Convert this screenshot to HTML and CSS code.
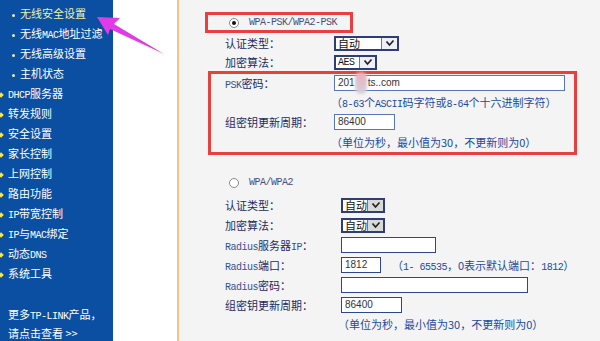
FILE: index.html
```html
<!DOCTYPE html>
<html lang="zh-CN">
<head>
    <meta charset="UTF-8">
    <title>无线安全设置</title>
    <link rel="stylesheet" href="styles.css">
</head>
<body>

<div class="page">
    <!-- Left menu -->
    <nav class="sidebar">
        <ul class="menu">
            <li class="sub active">无线安全设置</li>
            <li class="sub">无线<span class="mono">MAC</span>地址过滤</li>
            <li class="sub">无线高级设置</li>
            <li class="sub">主机状态</li>
            <li class="top"><span class="mono">DHCP</span>服务器</li>
            <li class="top">转发规则</li>
            <li class="top">安全设置</li>
            <li class="top">家长控制</li>
            <li class="top">上网控制</li>
            <li class="top">路由功能</li>
            <li class="top"><span class="mono">IP</span>带宽控制</li>
            <li class="top"><span class="mono">IP</span>与<span class="mono">MAC</span>绑定</li>
            <li class="top">动态<span class="mono">DNS</span></li>
            <li class="top">系统工具</li>
        </ul>
        <div class="more">更多<span class="mono">TP-LINK</span>产品，<br>请点击查看 &gt;&gt;</div>
    </nav>

    <div class="gap"></div>

    <!-- Settings form -->
    <main class="content">
        <div class="form">
            <div class="choice boxed">
                <span class="radio checked"></span><span class="mode">WPA-PSK/WPA2-PSK</span>
            </div>
            <div class="row h20">
                <span class="label">认证类型：</span>
                <div class="select w65"><span class="value">自动</span><span class="drop"><svg width="10" height="8" viewBox="0 0 10 8"><polyline points="1.5,2.5 4.5,6 8.5,1.5" fill="none" stroke="#222" stroke-width="1.7"/></svg></span></div>
            </div>
            <div class="row h18">
                <span class="label">加密算法：</span>
                <div class="select w43"><span class="value mono">AES</span><span class="drop"><svg width="10" height="8" viewBox="0 0 10 8"><polyline points="1.5,2.5 4.5,6 8.5,1.5" fill="none" stroke="#222" stroke-width="1.7"/></svg></span></div>
            </div>

            <div class="highlight">
                <div class="row h18">
                    <span class="label"><span class="mono">PSK</span>密码：</span>
                    <div class="input w231">201<span class="blur"></span>ts..com</div>
                </div>
                <div class="row h20">
                    <span></span>
                    <span class="hint">（<span class="mono">8-63</span>个<span class="mono">ASCII</span>码字符或<span class="mono">8-64</span>个十六进制字符）</span>
                </div>
                <div class="row h20">
                    <span class="label">组密钥更新周期：</span>
                    <div class="input w61">86400</div>
                </div>
                <div class="row h20">
                    <span></span>
                    <span class="hint">（单位为秒，最小值为30，不更新则为0）</span>
                </div>
            </div>

            <div class="choice plain">
                <span class="radio"></span><span class="mode">WPA/WPA2</span>
            </div>
            <div class="row wide h20">
                <span class="label">认证类型：</span>
                <div class="select small w44"><span class="value">自动</span><span class="drop"><svg width="10" height="8" viewBox="0 0 10 8"><polyline points="1.5,2.5 4.5,6 8.5,1.5" fill="none" stroke="#222" stroke-width="1.7"/></svg></span></div>
            </div>
            <div class="row wide h20">
                <span class="label">加密算法：</span>
                <div class="select small w44"><span class="value">自动</span><span class="drop"><svg width="10" height="8" viewBox="0 0 10 8"><polyline points="1.5,2.5 4.5,6 8.5,1.5" fill="none" stroke="#222" stroke-width="1.7"/></svg></span></div>
            </div>
            <div class="row wide h20">
                <span class="label"><span class="mono">Radius</span>服务器<span class="mono">IP</span>：</span>
                <div class="input dark w95"></div>
            </div>
            <div class="row wide h20">
                <span class="label"><span class="mono">Radius</span>端口：</span>
                <div class="inline">
                    <div class="input dark w40">1812</div>
                    <span class="hint">（<span class="mono">1- 65535</span>，0表示默认端口：<span class="mono">1812</span>）</span>
                </div>
            </div>
            <div class="row wide h20">
                <span class="label"><span class="mono">Radius</span>密码：</span>
                <div class="input dark w187"></div>
            </div>
            <div class="row wide h20">
                <span class="label">组密钥更新周期：</span>
                <div class="input dark w61">86400</div>
            </div>
            <div class="row wide h18">
                <span></span>
                <span class="hint">（单位为秒，最小值为30，不更新则为0）</span>
            </div>
        </div>
    </main>
</div>

<!-- Pointer arrow drawn over the menu -->
<svg class="arrow" width="600" height="341" viewBox="0 0 600 341">
    <polygon points="97,17 120,18 114,24 164,54 110,29 108,35" fill="#e03be6"/>
</svg>

</body>
</html>
```

FILE: styles.css
```css
body {
    margin: 0;
    font-family: "Noto Sans CJK SC", "Liberation Sans", sans-serif;
    font-size: 11px;
    background-color: #fff;
}
.page {
    display: flex;
    height: 341px;
    overflow: hidden;
}
.mono {
    font-family: "Liberation Mono", monospace;
    font-size: 10px;
    letter-spacing: -0.5px;
}

/* Left menu */
.sidebar {
    width: 113px;
    background-color: #0b4fa2;
    color: #fff;
    padding-top: 3px;
    box-sizing: border-box;
}
.menu {
    list-style: none;
    margin: 0;
    padding: 0;
}
.menu li {
    height: 20px;
    line-height: 20px;
    white-space: nowrap;
}
.menu .sub {
    padding-left: 20px;
}
.menu .sub::before {
    content: "";
    display: inline-block;
    width: 3px;
    height: 3px;
    border-radius: 50%;
    background-color: #e6eea8;
    margin-left: -8px;
    margin-right: 5px;
    vertical-align: middle;
}
.menu .active {
    color: #eef2a4;
}
.menu .top {
    padding-left: 8px;
}
.menu .top::before {
    content: "";
    display: inline-block;
    width: 4px;
    height: 4px;
    background-color: #ffe63a;
    transform: rotate(45deg);
    margin-left: -9px;
    margin-right: 5px;
    vertical-align: middle;
}
.more {
    margin-top: 23px;
    padding-left: 8px;
    line-height: 16px;
}

.gap {
    width: 64px;
    background-color: #fff;
}

/* Right content */
.content {
    flex: 1;
    background-color: #f4f4f4;
    border-left: 2px solid #f5c08a;
}
.form {
    padding: 12px 0 0 46px;
}
.choice {
    display: flex;
    align-items: center;
    box-sizing: border-box;
}
.choice.boxed {
    margin-left: -20px;
    width: 148px;
    height: 21px;
    border: 3px solid #e8403f;
    padding-left: 21px;
}
.choice.plain {
    margin-top: 15px;
    margin-left: -17px;
    padding-left: 21px;
    height: 25px;
}
.radio {
    display: inline-block;
    width: 10px;
    height: 10px;
    border: 1px solid #8a8a8a;
    border-radius: 50%;
    background-color: #fff;
    box-sizing: border-box;
    margin-right: 10px;
    position: relative;
}
.radio.checked::after {
    content: "";
    position: absolute;
    left: 2px;
    top: 2px;
    width: 4px;
    height: 4px;
    border-radius: 50%;
    background-color: #111;
}
.mode {
    font-family: "Liberation Mono", monospace;
    font-size: 10px;
    letter-spacing: -0.5px;
    color: #4b4f7a;
}

.row {
    display: grid;
    grid-template-columns: 109px auto;
    align-items: center;
}
.row.wide {
    grid-template-columns: 116px auto;
}
.h18 { height: 18px; }
.h20 { height: 20px; }
.label {
    color: #1d2a62;
    white-space: nowrap;
}
.label .mono {
    color: #34508f;
}
.hint {
    color: #2149a0;
    white-space: nowrap;
    margin-left: -3px;
}
.inline {
    display: flex;
    align-items: center;
}
.inline .hint {
    margin-left: 11px;
}

.highlight {
    margin-left: -17px;
    width: 369px;
    border: 3px solid #e8403f;
    padding-left: 14px;
    box-sizing: border-box;
}

/* Fake dropdowns */
.select {
    display: flex;
    align-items: stretch;
    height: 15px;
    border: 2px solid #2f3d76;
    background-color: #fff;
    box-sizing: border-box;
}
.select .value {
    padding-left: 2px;
    line-height: 11px;
    color: #111;
}
.select .drop {
    margin-left: auto;
    width: 15px;
    border-left: 1px solid #6d78a4;
    background-color: #eef0f6;
    display: flex;
    align-items: center;
    justify-content: center;
}
.select.small .drop {
    background-color: #d9d9d9;
}
.w65 { width: 65px; }
.w43 { width: 43px; }
.w44 { width: 44px; }

/* Fake text inputs */
.input {
    height: 16px;
    border: 1px solid #5877b8;
    background-color: #fff;
    box-sizing: border-box;
    font-family: "Liberation Sans", sans-serif;
    font-size: 10px;
    line-height: 14px;
    padding-left: 3px;
    color: #333;
    white-space: nowrap;
}
.input.dark {
    border-color: #2f4590;
    border-width: 1.5px;
}
.w231 { width: 231px; }
.w61 { width: 61px; }
.w95 { width: 95px; }
.w40 { width: 40px; }
.w187 { width: 187px; }

.blur {
    display: inline-block;
    width: 12px;
    height: 22px;
    margin: -5px 1px -5px 0;
    vertical-align: middle;
    border-radius: 6px;
    background: linear-gradient(#eab0bb, #cfd2dc);
    filter: blur(1.5px);
}

.arrow {
    position: absolute;
    left: 0;
    top: 0;
    pointer-events: none;
}
```
